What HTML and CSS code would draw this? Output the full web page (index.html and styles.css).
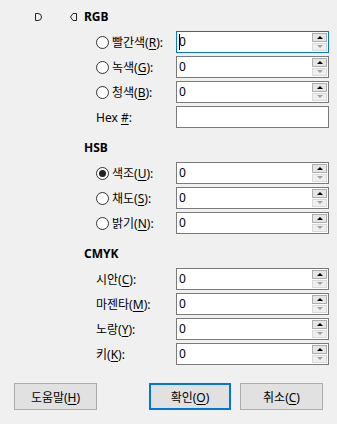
FILE: index.html
```html
<!DOCTYPE html>
<html lang="ko">
<head>
    <meta charset="UTF-8">
    <title>색 선택</title>
    <link rel="stylesheet" href="styles.css">
</head>
<body>
<div class="dialog">

    <!-- RGB -->
    <div class="group">
        <div class="group-head first">
            <svg class="mark mark-a" width="7" height="8" viewBox="0 0 7 8"><path d="M0.5 0.5 H3 Q6.5 0.5 6.5 4 Q6.5 7.5 3 7.5 H0.5 Z" fill="none" stroke="#222" stroke-width="1"/></svg>
            <svg class="mark mark-b" width="7" height="8" viewBox="0 0 7 8"><path d="M6.5 0.5 H3 L0.5 4 L3 7.5 H6.5 Z" fill="none" stroke="#222" stroke-width="1"/></svg>
            <h2>RGB</h2>
        </div>
        <div class="rows">
            <div class="row">
                <label class="opt"><span class="radio"></span><span>빨간색(<u>R</u>):</span></label>
                <div class="spin focus"><span class="caret"></span><span class="val">0</span><span class="arrows"><span class="up"></span><span class="dn"></span></span></div>
            </div>
            <div class="row">
                <label class="opt"><span class="radio"></span><span>녹색(<u>G</u>):</span></label>
                <div class="spin"><span class="val">0</span><span class="arrows"><span class="up"></span><span class="dn"></span></span></div>
            </div>
            <div class="row">
                <label class="opt"><span class="radio"></span><span>청색(<u>B</u>):</span></label>
                <div class="spin"><span class="val">0</span><span class="arrows"><span class="up"></span><span class="dn"></span></span></div>
            </div>
            <div class="row">
                <label class="opt"><span>Hex <u>#</u>:</span></label>
                <div class="spin"></div>
            </div>
        </div>
    </div>

    <!-- HSB -->
    <div class="group">
        <div class="group-head"><h2>HSB</h2></div>
        <div class="rows">
            <div class="row">
                <label class="opt"><span class="radio on"></span><span>색조(<u>U</u>):</span></label>
                <div class="spin"><span class="val">0</span><span class="arrows"><span class="up"></span><span class="dn"></span></span></div>
            </div>
            <div class="row">
                <label class="opt"><span class="radio"></span><span>채도(<u>S</u>):</span></label>
                <div class="spin"><span class="val">0</span><span class="arrows"><span class="up"></span><span class="dn"></span></span></div>
            </div>
            <div class="row">
                <label class="opt"><span class="radio"></span><span>밝기(<u>N</u>):</span></label>
                <div class="spin"><span class="val">0</span><span class="arrows"><span class="up"></span><span class="dn"></span></span></div>
            </div>
        </div>
    </div>

    <!-- CMYK -->
    <div class="group">
        <div class="group-head"><h2>CMYK</h2></div>
        <div class="rows">
            <div class="row">
                <label class="opt"><span>시안(<u>C</u>):</span></label>
                <div class="spin"><span class="val">0</span><span class="arrows"><span class="up"></span><span class="dn"></span></span></div>
            </div>
            <div class="row">
                <label class="opt"><span>마젠타(<u>M</u>):</span></label>
                <div class="spin"><span class="val">0</span><span class="arrows"><span class="up"></span><span class="dn"></span></span></div>
            </div>
            <div class="row">
                <label class="opt"><span>노랑(<u>Y</u>):</span></label>
                <div class="spin"><span class="val">0</span><span class="arrows"><span class="up"></span><span class="dn"></span></span></div>
            </div>
            <div class="row">
                <label class="opt"><span>키(<u>K</u>):</span></label>
                <div class="spin"><span class="val">0</span><span class="arrows"><span class="up"></span><span class="dn"></span></span></div>
            </div>
        </div>
    </div>

    <!-- 버튼 -->
    <div class="footer">
        <button type="button" class="btn">도움말(<u>H</u>)</button>
        <button type="button" class="btn ok">확인(<u>O</u>)</button>
        <button type="button" class="btn">취소(<u>C</u>)</button>
    </div>
</div>
</body>
</html>
```

FILE: styles.css
```css
body {
    margin: 0;
    background-color: #f0f0f0;
    font-family: "Noto Sans", "Noto Sans CJK KR", sans-serif;
    font-size: 12px;
    color: #000;
}

.dialog {
    width: 337px;
    height: 424px;
    padding-top: 9px;
    box-sizing: border-box;
}

/* 그룹 */
.group {
    margin-bottom: 12px;
}

.group-head {
    display: flex;
    align-items: center;
    height: 16px;
    padding-left: 84px;
    margin-bottom: 6px;
}

.group-head.first {
    padding-left: 35px;
}

.mark {
    display: block;
}

.mark-a {
    margin-right: 28px;
}

.mark-b {
    margin-right: 7px;
}

h2 {
    margin: 0;
    font-size: 12px;
    font-weight: bold;
    line-height: 16px;
}

.rows {
    display: flex;
    flex-direction: column;
    gap: 3px;
    padding-left: 96px;
}

.row {
    display: flex;
    align-items: center;
    height: 22px;
}

.opt {
    display: flex;
    align-items: center;
    width: 80px;
    white-space: pre;
}

u {
    text-decoration-thickness: 1px;
    text-underline-offset: 2px;
}

/* 라디오 */
.radio {
    width: 11px;
    height: 11px;
    border: 1px solid #333;
    border-radius: 50%;
    background-color: #fff;
    margin-right: 3px;
    display: flex;
    align-items: center;
    justify-content: center;
}

.radio.on::after {
    content: "";
    width: 7px;
    height: 7px;
    border-radius: 50%;
    background-color: #222;
}

/* 숫자 입력 */
.spin {
    width: 153px;
    height: 22px;
    box-sizing: border-box;
    border: 1px solid #7a7a7a;
    background-color: #fff;
    display: flex;
    align-items: center;
    padding-left: 2px;
    padding-right: 1px;
}

.spin.focus {
    border-color: #0078d7;
}

.caret {
    width: 1px;
    height: 16px;
    background-color: #000;
    margin-right: -1px;
}

.val {
    flex: 1;
    line-height: 16px;
}

.arrows {
    display: flex;
    flex-direction: column;
    gap: 1px;
    width: 15px;
    height: 18px;
}

.arrows span {
    flex: 1;
    box-sizing: border-box;
    display: flex;
    align-items: center;
    justify-content: center;
}

.up {
    background-color: #e5e5e5;
    border: 1px solid #adadad;
}

.dn {
    background-color: #efefef;
    border: 1px solid #dadada;
}

.up::after {
    content: "";
    border-left: 3px solid transparent;
    border-right: 3px solid transparent;
    border-bottom: 3px solid #000;
}

.dn::after {
    content: "";
    border-left: 3px solid transparent;
    border-right: 3px solid transparent;
    border-top: 3px solid #a0a0a0;
}

/* 버튼 */
.footer {
    display: flex;
    gap: 9px;
    padding: 6px 14px 0 14px;
}

.btn {
    height: 27px;
    width: 83px;
    box-sizing: border-box;
    background-color: #e1e1e1;
    border: 1px solid #adadad;
    font-family: "Noto Sans", "Noto Sans CJK KR", sans-serif;
    font-size: 12px;
    color: #000;
    padding: 0;
}

.btn.ok {
    margin-left: auto;
    width: 82px;
    border: 2px solid #0078d7;
}
```
